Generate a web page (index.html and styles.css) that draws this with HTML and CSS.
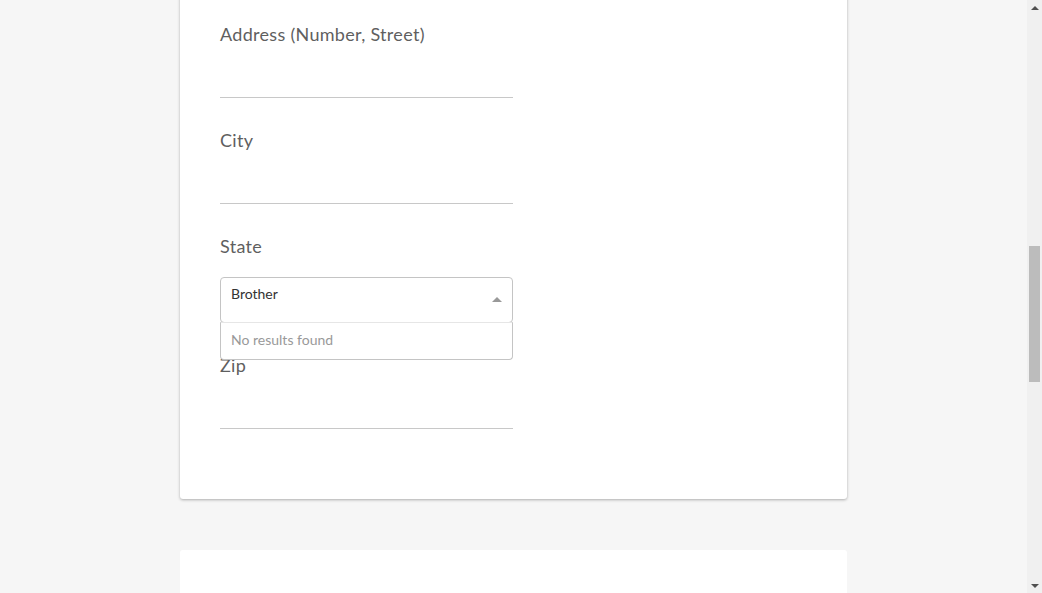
FILE: index.html
```html
<!DOCTYPE html>
<html>
<head>
<meta charset="utf-8">
<link rel="stylesheet" href="styles.css">
</head>
<body>
<div class="page">
  <main class="main">
    <section class="card form-card">
      <div class="field">
        <label class="label">Address (Number, Street)</label>
        <div class="line-input"></div>
      </div>
      <div class="field">
        <label class="label">City</label>
        <div class="line-input"></div>
      </div>
      <div class="field field-state">
        <label class="label">State</label>
        <div class="select">
          <div class="select-control">
            <span class="select-value">Brother</span>
            <span class="select-arrow"></span>
          </div>
          <div class="select-menu">No results found</div>
        </div>
      </div>
      <div class="field field-last">
        <label class="label">Zip</label>
        <div class="line-input"></div>
      </div>
    </section>
    <section class="card next-card"></section>
  </main>
  <aside class="scrollbar">
    <div class="sb-btn sb-up"></div>
    <div class="sb-track"><div class="sb-thumb" style="margin-top:231px;height:136px"></div></div>
    <div class="sb-btn sb-down"></div>
  </aside>
</div>
</body>
</html>
```
FILE: styles.css
```css
html, body {
  margin: 0;
  padding: 0;
  height: 593px;
  overflow: hidden;
  background: #f6f6f6;
  font-family: "Lato", "Noto Sans", sans-serif;
}
.page {
  display: flex;
  height: 593px;
}
.main {
  flex: 1;
  display: flex;
  flex-direction: column;
  align-items: center;
}
.card {
  width: 667px;
  background: #fff;
  box-sizing: border-box;
}
.form-card {
  margin-top: -20px;
  padding: 41px 40px 70px;
  border-radius: 3px;
  box-shadow: 0 1px 3px rgba(0,0,0,0.3);
}
.next-card {
  margin-top: 51px;
  flex: 1;
  border-radius: 3px 3px 0 0;
}
.field {
  width: 293px;
  margin-bottom: 29px;
}
.field-last { margin-bottom: 0; }
.label {
  display: block;
  font-size: 18px;
  line-height: 27px;
  letter-spacing: 0.3px;
  color: #5f5f5f;
}
.line-input {
  height: 49px;
  border-bottom: 1px solid #c8c8c8;
}
.field-state .label { margin-bottom: 17px; }
.select {
  position: relative;
  height: 46px;
}
.select-control {
  box-sizing: border-box;
  height: 46px;
  border: 1px solid #c4c4c4;
  border-radius: 4px;
  display: flex;
  align-items: flex-start;
  justify-content: space-between;
  padding: 7px 10px 0 10px;
}
.select-value {
  font-size: 14px;
  line-height: 18px;
  color: #333;
}
.select-arrow {
  width: 0;
  height: 0;
  margin-top: 12px;
  border-left: 5px solid transparent;
  border-right: 5px solid transparent;
  border-bottom: 5px solid #999;
}
.select-menu {
  position: absolute;
  left: 0;
  right: 0;
  top: 45px;
  box-sizing: border-box;
  height: 38px;
  background: #fff;
  border: 1px solid #c4c4c4;
  border-top-color: #e6e6e6;
  border-radius: 0 0 4px 4px;
  padding: 0 10px;
  font-size: 14px;
  line-height: 34px;
  color: #999;
}
.scrollbar {
  width: 15px;
  background: #f0f0f0;
  display: flex;
  flex-direction: column;
}
.sb-btn {
  height: 15px;
  display: flex;
  align-items: center;
  justify-content: center;
}
.sb-up::before {
  content: "";
  border-left: 4px solid transparent;
  border-right: 4px solid transparent;
  border-bottom: 4px solid #505050;
}
.sb-down::before {
  content: "";
  border-left: 4px solid transparent;
  border-right: 4px solid transparent;
  border-top: 4px solid #505050;
}
.sb-track {
  flex: 1;
  display: flex;
  flex-direction: column;
  align-items: center;
}
.sb-thumb {
  width: 11px;
  background: #bcbcbc;
}
```
